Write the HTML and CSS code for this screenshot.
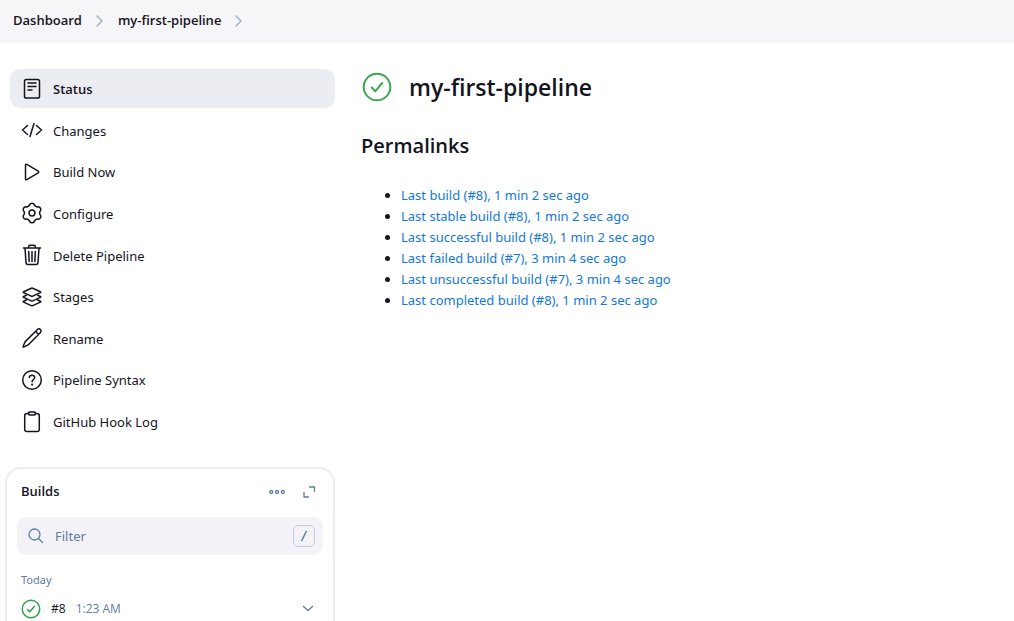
FILE: index.html
```
<!DOCTYPE html>
<html lang="en">
<head>
<meta charset="utf-8">
<meta name="viewport" content="width=device-width, initial-scale=1">
<title>my-first-pipeline</title>
<link rel="stylesheet" href="styles.css">
</head>
<body>
<header class="breadcrumbs">
  <a href="#">Dashboard</a>
  <svg class="crumb-arrow" viewBox="0 0 10 14"><path d="M2 2l5 5-5 5"/></svg>
  <a href="#">my-first-pipeline</a>
  <svg class="crumb-arrow" viewBox="0 0 10 14"><path d="M2 2l5 5-5 5"/></svg>
</header>
<div class="layout">
  <aside class="sidebar">
    <nav class="tasks">
      <a class="task task-active" href="#"><svg class="icon" viewBox="0 0 24 24"><rect x="4.500" y="2.500" width="15" height="18.500" rx="1.800"/><path d="M8 6h8M8 9.500h8M8 13h4"/></svg>Status</a>
      <a class="task" href="#"><svg class="icon" viewBox="0 0 24 24"><path d="M7.500 7.500L2.500 12l5 4.500M16.500 7.500l5 4.500-5 4.500M14 5.500l-4 13"/></svg>Changes</a>
      <a class="task" href="#"><svg class="icon" viewBox="0 0 24 24"><path d="M5.500 5.200v13.600c0 .8.700 1.100 1.300.8l11.400-6.800c.6-.4.6-1.200 0-1.600L6.800 4.400c-.6-.3-1.300 0-1.300.8z"/></svg>Build Now</a>
      <a class="task" href="#"><svg class="icon" viewBox="0 0 24 24"><circle cx="12" cy="12" r="2.900"/><path d="M9.720 3.500A2.700 2.700 0 0 1 14.280 3.500A3.200 3.200 0 0 0 18.220 5.780A2.700 2.700 0 0 1 20.500 9.720A3.200 3.200 0 0 0 20.500 14.280A2.700 2.700 0 0 1 18.220 18.220A3.200 3.200 0 0 0 14.280 20.500A2.700 2.700 0 0 1 9.720 20.500A3.200 3.200 0 0 0 5.780 18.220A2.700 2.700 0 0 1 3.500 14.280A3.200 3.200 0 0 0 3.500 9.720A2.700 2.700 0 0 1 5.780 5.780A3.200 3.200 0 0 0 9.720 3.500z"/></svg>Configure</a>
      <a class="task" href="#"><svg class="icon" viewBox="0 0 24 24"><path d="M5 5l1 14.500c.1 1.200.8 2 2 2h8c1.200 0 1.900-.8 2-2L19 5M3.500 5h17M8.700 5V3.500c0-.7.500-1.200 1.200-1.200h4.200c.7 0 1.200.5 1.200 1.200V5M12 8.500v10M8.700 8.500l.4 10M15.300 8.500l-.4 10"/></svg>Delete Pipeline</a>
      <a class="task" href="#"><svg class="icon" viewBox="0 0 24 24"><path d="M11.300 3.200L3.600 6.700c-.5.200-.5.700 0 .9l7.700 3.500c.5.200.9.200 1.400 0l7.700-3.500c.5-.2.500-.7 0-.9l-7.700-3.500c-.5-.2-.9-.2-1.400 0z"/><path d="M6.300 10.300l-2.700 1.200c-.5.200-.5.700 0 .9l7.700 3.500c.5.200.9.200 1.400 0l7.700-3.500c.5-.2.500-.7 0-.9l-2.700-1.200M6.300 15l-2.700 1.200c-.5.200-.5.700 0 .9l7.700 3.500c.5.200.9.200 1.400 0l7.700-3.500c.5-.2.500-.7 0-.9L17.700 15"/></svg>Stages</a>
      <a class="task" href="#"><svg class="icon" viewBox="0 0 24 24"><path d="M16.200 4.700L5.500 15.400c-.6.600-2.500 5.300-2.500 5.600s5-1.900 5.600-2.500L19.300 7.800M16.200 4.700l1.200-1.200c.9-.9 2.200-.8 3 0s.9 2.200 0 3l-1.100 1.300M16.200 4.700c-.2 1.700 1.400 3.300 3.100 3.100"/></svg>Rename</a>
      <a class="task" href="#"><svg class="icon" viewBox="0 0 24 24"><circle cx="12" cy="12" r="9.300"/><path d="M9.300 9.500c.1-1.600 1.200-2.300 2.700-2.300 1.600 0 2.700.9 2.700 2.300 0 2-2.600 2.100-2.600 4.200"/><circle class="dot" cx="12.100" cy="16.600" r="1.100"/></svg>Pipeline Syntax</a>
      <a class="task" href="#"><svg class="icon" viewBox="0 0 24 24"><path d="M8.500 3.500H7A2.300 2.300 0 004.700 5.800v13.400A2.300 2.300 0 007 21.500h10a2.300 2.300 0 002.300-2.300V5.800A2.300 2.300 0 0017 3.500h-1.500"/><rect x="8.500" y="2" width="7" height="3" rx="1.200"/></svg>GitHub Hook Log</a>
    </nav>
    <section class="builds">
      <div class="builds-header">
        <h2>Builds</h2>
        <button class="tool" type="button" aria-label="More actions"><svg viewBox="0 0 16 16"><circle cx="2.200" cy="8" r="1.500"/><circle cx="8" cy="8" r="1.500"/><circle cx="13.800" cy="8" r="1.500"/></svg></button>
        <button class="tool" type="button" aria-label="Expand"><svg viewBox="0 0 16 16"><path d="M8.500 3H13.500V7.500M7.500 13H3V8.500"/></svg></button>
      </div>
      <div class="search">
        <svg class="search-icon" viewBox="0 0 18 18"><circle cx="7.500" cy="7.500" r="5.500"/><path d="M11.500 11.500l4 4"/></svg>
        <input type="search" placeholder="Filter" aria-label="Filter builds">
        <kbd><svg viewBox="0 0 10 14"><path d="M7.200 2.500L2.800 11.500"/></svg></kbd>
      </div>
      <h3 class="day">Today</h3>
      <div class="build">
        <svg class="build-status" viewBox="0 0 32 32"><circle cx="16" cy="16" r="14"/><path d="M10.500 16.800l3.500 3.700 7.500-9"/></svg>
        <a class="build-number" href="#">#8</a>
        <span class="build-time">1:23 AM</span>
        <button class="tool" type="button" aria-label="Build #8 menu"><svg viewBox="0 0 16 16"><path d="M3.500 5.500l4.500 4 4.500-4"/></svg></button>
      </div>
    </section>
  </aside>
  <main class="content">
    <div class="title">
      <svg class="title-status" viewBox="0 0 32 32"><circle cx="16" cy="16" r="13.300"/><path d="M10.800 16.500l3.400 3.900 7-8.400"/></svg>
      <h1>my-first-pipeline</h1>
    </div>
    <h2 class="subtitle">Permalinks</h2>
    <ul class="permalinks">
      <li><a href="#">Last build (#8), 1 min 2 sec ago</a></li>
      <li><a href="#">Last stable build (#8), 1 min 2 sec ago</a></li>
      <li><a href="#">Last successful build (#8), 1 min 2 sec ago</a></li>
      <li><a href="#">Last failed build (#7), 3 min 4 sec ago</a></li>
      <li><a href="#">Last unsuccessful build (#7), 3 min 4 sec ago</a></li>
      <li><a href="#">Last completed build (#8), 1 min 2 sec ago</a></li>
    </ul>
  </main>
</div>
</body>
</html>
```

FILE: styles.css
```
* {
  box-sizing: border-box;
}

html {
  overflow: hidden;
}

body {
  margin: 0;
  background: #fff;
  color: #14141f;
  font-family: "Noto Sans", "Open Sans", sans-serif;
  font-size: 13px;
  line-height: 21px;
}

a {
  color: inherit;
  text-decoration: none;
}

h1,
h2,
h3 {
  margin: 0;
  font-weight: 600;
}

h1,
h2,
.breadcrumbs,
.task-active,
.build {
  font-family: "Open Sans", "Noto Sans", sans-serif;
}

svg {
  flex: none;
  fill: none;
  stroke: currentColor;
  stroke-linecap: round;
  stroke-linejoin: round;
}

.breadcrumbs {
  display: flex;
  align-items: center;
  gap: 13px;
  padding: 10px 13px 12px;
  background: #f6f6f8;
  font-weight: 600;
}

.crumb-arrow {
  width: 10px;
  height: 14px;
  color: #9fb3cb;
  stroke-width: 1.500;
}

.layout {
  display: grid;
  grid-template-columns: 335px 1fr;
  gap: 26px;
  padding-top: 26px;
}

.sidebar {
  padding-left: 5px;
}

.tasks {
  display: flex;
  flex-direction: column;
  justify-content: space-between;
  min-height: 372px;
  margin-left: 5px;
}

.task {
  display: flex;
  align-items: center;
  gap: 9px;
  padding: 10px 10px 8px;
  border-radius: 10px;
}

.task-active {
  background: #ecedf2;
  font-weight: 600;
}

.icon {
  width: 24px;
  height: 24px;
  margin: -3px 0 -1px;
  stroke-width: 1.500;
}

.dot {
  fill: currentColor;
  stroke: none;
}

.builds {
  margin-top: 26px;
  padding: 12px 10px;
  border: 2px solid #ebebf2;
  border-radius: 16px;
  color: #607d9f;
}

.builds-header {
  display: flex;
  align-items: center;
  gap: 16px;
  padding: 0 6px 0 4px;
}

.builds-header h2 {
  flex: 1;
  color: #14141f;
  font-size: 13px;
}

.tool {
  display: flex;
  padding: 0;
  border: 0;
  background: none;
  color: inherit;
}

.tool svg {
  width: 16px;
  height: 16px;
  stroke-width: 1.300;
}

.search {
  display: flex;
  align-items: center;
  gap: 10px;
  height: 38px;
  margin-top: 15px;
  padding: 0 8px 0 10px;
  border-radius: 10px;
  background: #f2f2f7;
}

.search-icon {
  width: 18px;
  height: 18px;
  stroke-width: 1.300;
}

.search input {
  flex: 1;
  min-width: 0;
  padding: 0;
  border: 0;
  background: none;
  color: inherit;
  font: inherit;
}

.search input::placeholder {
  color: inherit;
  opacity: 1;
}

kbd {
  display: flex;
  align-items: center;
  justify-content: center;
  width: 22px;
  height: 22px;
  border: 1px solid #c5cddb;
  border-radius: 5px;
}

kbd svg {
  width: 10px;
  height: 14px;
  stroke-width: 1.500;
}

.day {
  margin: 14px 4px 0;
  font-size: 11px;
  font-weight: 400;
}

.build {
  display: flex;
  align-items: center;
  gap: 10px;
  padding: 8px 7px 8px 4px;
  font-size: 12px;
}

.build-status {
  width: 20px;
  height: 20px;
  color: #2ba148;
  stroke-width: 2.300;
}

.build-number {
  color: #14141f;
}

.build-time {
  flex: 1;
}

.title {
  display: flex;
  align-items: center;
  gap: 16px;
}

.title h1 {
  font-size: 23px;
  line-height: 36px;
}

.title-status {
  width: 32px;
  height: 32px;
  color: #3fa650;
  stroke-width: 2;
}

.subtitle {
  margin-top: 26px;
  font-size: 20px;
  line-height: 30px;
}

.permalinks {
  margin: 24px 0 0;
  padding-left: 40px;
}

.permalinks a {
  color: #1378dc;
}
```
